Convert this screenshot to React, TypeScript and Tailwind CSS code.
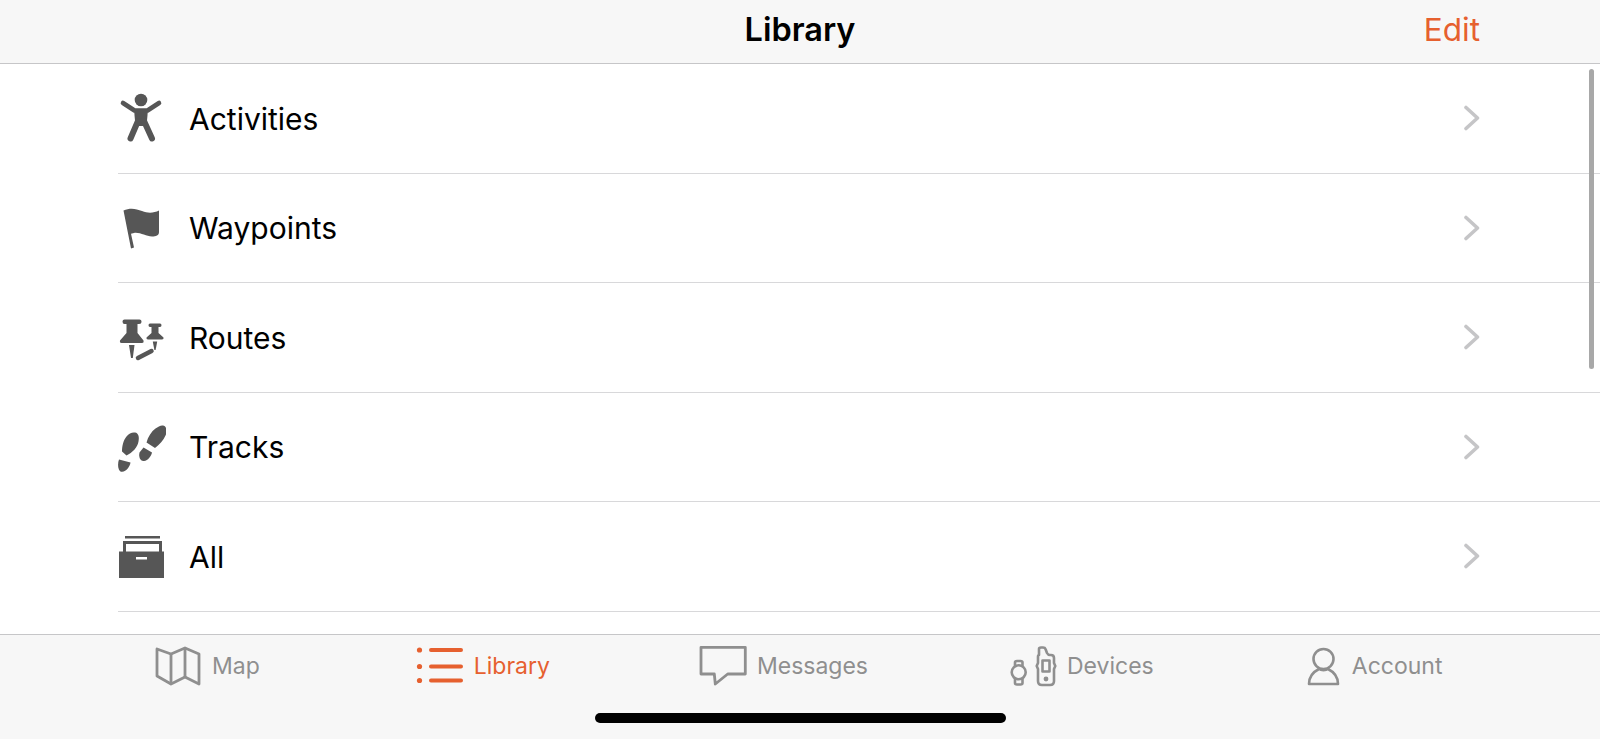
const ICON_FILL = '#565656'
const TAB_GRAY = '#8f8f8f'
const ORANGE = '#e6602f'

function ActivitiesIcon() {
  return (
    <svg width={48} height={56} viewBox="0 0 48 56" fill={ICON_FILL} aria-hidden>
      <circle cx={23} cy={10} r={6.3} />
      <path d="M5 13 16.5 20.5H29.5L41 13" fill="none" stroke={ICON_FILL} strokeWidth={4.6} strokeLinecap="round" strokeLinejoin="round" />
      <path d="M16 19.5H30L28.5 36H17.5Z" />
      <path d="M20 31 12.5 48.5M26 31 34 48.5" fill="none" stroke={ICON_FILL} strokeWidth={6} strokeLinecap="round" />
    </svg>
  )
}

function WaypointsIcon() {
  return (
    <svg width={48} height={56} viewBox="0 0 48 56" fill={ICON_FILL} aria-hidden>
      <path d="M5.5 10.5C12 7.5 18 8.5 24 11 30 13.5 36 13 41 10.5V32C41 35.5 38 36.5 34 36.5 28 36.5 22 32 16 33L13 33.8 16 47.5 13 48.5Z" />
    </svg>
  )
}

function RoutesIcon() {
  return (
    <svg width={48} height={56} viewBox="0 0 48 56" fill={ICON_FILL} aria-hidden>
      <path d="M6.5 10.5H21.5Q23.5 10.5 23.5 12.5 23.5 15 21 15H19.5V24L25.5 31.5Q26 34 24 34H3.5Q1.5 34 2 31.5L8.5 24V15H6.5Q4.5 15 4.5 12.5 4.5 10.5 6.5 10.5Z" />
      <path d="M11 36H16.5L14.8 49H13Z" />
      <path d="M32 14.5H42Q43.5 14.5 43.5 16.2 43.5 18 42 18H40.5V24L45.5 28.5Q46 30.5 44 30.5H30Q28 30.5 28.5 28.5L33.5 24V18H32Q30.5 18 30.5 16.2 30.5 14.5 32 14.5Z" />
      <path d="M34.8 32.5H39.2L37.6 41H36.4Z" />
      <path d="M20 49 33.5 42" fill="none" stroke={ICON_FILL} strokeWidth={4.5} strokeLinecap="round" />
    </svg>
  )
}

function TracksIcon() {
  return (
    <svg width={48} height={56} viewBox="0 0 48 56" fill={ICON_FILL} aria-hidden>
      <path d="M45 6.5C48.5 7 49.5 12 47.5 16.5 45.5 21.5 41.5 25.5 37 29L28.5 23.5C30 17.5 33.5 12.5 37.5 9.5 40 7.5 43 6 45 6.5Z" />
      <path d="M21.5 33.5 25.5 28.5 34 33.5C33 37.5 30 41.5 26 42 22 42.5 20.5 37.5 21.5 33.5Z" />
      <path d="M17 13.5C20.5 14 21.5 18 20.5 22.5 19.5 28.5 14.5 33.5 8.5 36.5L4 32.5C4 27 5.5 21 8.5 17.5 11 14.5 14 13 17 13.5Z" />
      <path d="M1 40.5 12.5 43.5C12 47.5 8.5 52.5 4 52.8 0 53 -0.8 45 1 40.5Z" />
    </svg>
  )
}

function AllIcon() {
  return (
    <svg width={48} height={56} viewBox="0 0 48 56" fill={ICON_FILL} aria-hidden>
      <path d="M7 8H42V10.5H7Z" />
      <path d="M6.5 24V14.5H42.5V24" fill="none" stroke={ICON_FILL} strokeWidth={3} />
      <path d="M1 23.5H46V50H1Z" />
      <path d="M18 29H29V31.5H18Z" fill="#fff" />
    </svg>
  )
}

function MapIcon() {
  return (
    <svg width={46} height={40} viewBox="0 0 46 40" fill="none" stroke={TAB_GRAY} strokeWidth={2.8} strokeLinejoin="round" aria-hidden>
      <path d="M2 3 16 8 30 2 44 8V38L30 31 16 38 2 30Z" />
      <path d="M16 8V38M30 2V31" />
    </svg>
  )
}

function LibraryIcon() {
  return (
    <svg width={48} height={40} viewBox="0 0 48 40" fill="none" stroke={ORANGE} strokeWidth={4} strokeLinecap="round" aria-hidden>
      <path d="M15 4H45M15 20.5H45M15 34.5H45" />
      <g fill={ORANGE} stroke="none">
        <circle cx={3.5} cy={4} r={2.6} />
        <circle cx={3.5} cy={20.5} r={2.6} />
        <circle cx={3.5} cy={34.5} r={2.6} />
      </g>
    </svg>
  )
}

function MessagesIcon() {
  return (
    <svg width={48} height={42} viewBox="0 0 48 42" fill="none" stroke={TAB_GRAY} strokeWidth={2.8} strokeLinejoin="round" aria-hidden>
      <path d="M2 2.3H46.3V29H28.7L16.3 39 15.3 29H2Z" />
    </svg>
  )
}

function DevicesIcon() {
  return (
    <svg width={48} height={42} viewBox="0 0 48 42" fill="none" stroke={TAB_GRAY} strokeWidth={2.6} strokeLinejoin="round" aria-hidden>
      <circle cx={9.7} cy={27.3} r={7} />
      <path d="M6 21.5V17.5Q6 16 8 16H11.5Q13.5 16 13.5 17.5V21.5M6 33V38Q6 39.5 8 39.5H11.5Q13.5 39.5 13.5 38V33" />
      <path d="M30 10V4Q30 2.5 32 2.5H34Q36 2.5 36.5 4L38 8Q39 10 41 10H42Q45 10 45 13V18L46.3 21 45 24V36Q45 40 41 40H33Q29 40 29 36V24L27.7 21 29 18V12Q29 10 30 10Z" />
      <path d="M33.5 15.5H40.5V26.5H33.5Z" />
      <circle cx={37} cy={34} r={2.4} fill={TAB_GRAY} stroke="none" />
    </svg>
  )
}

function AccountIcon() {
  return (
    <svg width={36} height={42} viewBox="0 0 36 42" fill="none" stroke={TAB_GRAY} strokeWidth={2.6} strokeLinejoin="round" aria-hidden>
      <circle cx={17.5} cy={14} r={10} />
      <path d="M3 39C3 32 7 27 13 24 15 25.5 20 25.5 22 24 28 27 32 32 32 39Z" />
    </svg>
  )
}

function Chevron() {
  return (
    <svg width={16} height={26} viewBox="0 0 16 26" fill="none" stroke="#c5c5c7" strokeWidth={3.6} strokeLinecap="round" strokeLinejoin="round" aria-hidden>
      <path d="M2 2.5 13.5 13 2 23.5" />
    </svg>
  )
}

const rows = [
  { label: 'Activities', Icon: ActivitiesIcon },
  { label: 'Waypoints', Icon: WaypointsIcon },
  { label: 'Routes', Icon: RoutesIcon },
  { label: 'Tracks', Icon: TracksIcon },
  { label: 'All', Icon: AllIcon },
]

export default function App() {
  return (
    <div className="flex h-screen w-full flex-col overflow-hidden bg-white font-['Inter',sans-serif] text-black">
      <header className="grid h-[64px] shrink-0 grid-cols-3 items-center border-b border-[#c6c6c8] bg-[#f7f7f7] pb-0.5">
        <div />
        <h1 className="text-center text-[32.5px] font-semibold">Library</h1>
        <button className="justify-self-end pr-[120px] pb-0.5 text-[31.5px] text-[#e6602f]">Edit</button>
      </header>

      <main className="relative min-h-0 flex-1 overflow-hidden">
        <ul className="ml-[118px]">
          {rows.map(({ label, Icon }) => (
            <li key={label} className="flex h-[109.5px] items-center gap-[23px] border-b border-[#d8d8da] pr-[120px]">
              <Icon />
              <span className="flex-1 pt-0.5 text-[30px]">{label}</span>
              <Chevron />
            </li>
          ))}
        </ul>
        <div className="absolute right-[6px] top-[5px] h-[300px] w-[5px] rounded-full bg-[#a8a8a8]" />
      </main>

      <footer className="h-[105px] shrink-0 border-t border-[#c6c6c8] bg-[#f7f7f7]">
        <nav className="flex h-[78px] items-center pb-4 pl-[155px] text-[23px] text-[#8f8f8f]">
          <a className="flex items-center gap-[11px]"><MapIcon /><span>Map</span></a>
          <a className="ml-[156px] flex items-center gap-[10px] text-[#e6602f]"><LibraryIcon /><span>Library</span></a>
          <a className="ml-[149px] flex items-center gap-[10px]"><MessagesIcon /><span>Messages</span></a>
          <a className="ml-[141px] flex items-center gap-[10px]"><DevicesIcon /><span>Devices</span></a>
          <a className="ml-[152px] flex items-center gap-[10px]"><AccountIcon /><span>Account</span></a>
        </nav>
        <div className="mx-auto h-[10px] w-[411px] rounded-full bg-black" />
      </footer>
    </div>
  )
}
